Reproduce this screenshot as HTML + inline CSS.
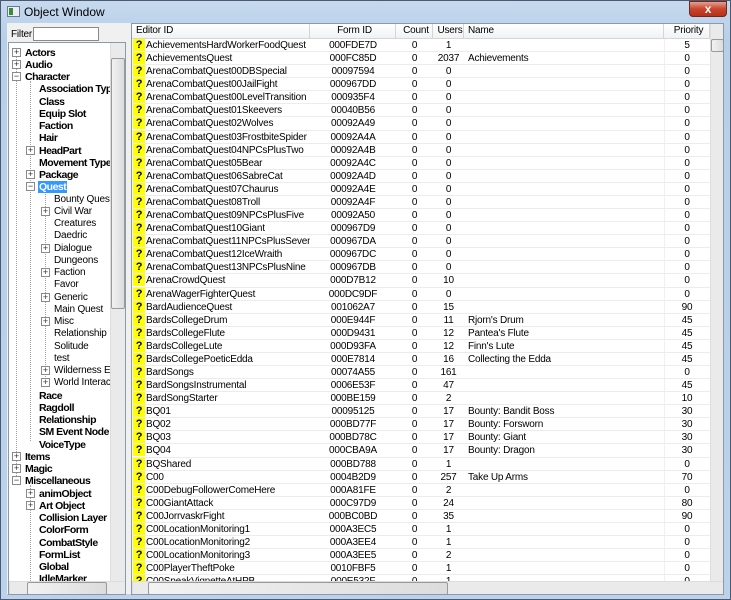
<!DOCTYPE html>
<html><head><meta charset="utf-8"><style>
*{margin:0;padding:0;box-sizing:border-box}
body{width:731px;height:600px;overflow:hidden;background:#fff;font-family:"Liberation Sans",sans-serif;font-size:10px;letter-spacing:-0.2px;color:#000;position:relative}
.frame{position:absolute;left:0;top:0;width:731px;height:600px;background:linear-gradient(#c6d9ee,#b7cfe9 40px,#bcd2ea);border:1px solid #4a5a70}
.title{position:absolute;left:24px;top:5px;font-size:12px;letter-spacing:0;color:#000}
.ticon{position:absolute;left:7px;top:6px;width:13px;height:11px;background:#e8eef4;border:1px solid #6a7a8a}
.ticon:before{content:"";position:absolute;left:1px;top:1px;width:4px;height:7px;background:#3a8a3a}
.close{position:absolute;left:689px;top:1px;width:38px;height:16px;background:linear-gradient(#e8a090,#c8442c 50%,#b83018);border:1px solid #6a2a20;border-radius:0 0 4px 4px;color:#fff;font-weight:bold;text-align:center;font-size:12px;line-height:14px}
.client{position:absolute;left:7px;top:23px;width:717px;height:571px;background:#f0f0f0}
.filterl{position:absolute;left:11px;top:29px;font-size:10px}
.filter{position:absolute;left:33px;top:27px;width:66px;height:14px;background:#fff;border:1px solid #8a8a8a}
.tree{position:absolute;left:8px;top:42px;width:118px;height:553px;background:#fff;border:1px solid #8a9aa8;overflow:hidden}
.ti{position:absolute;white-space:nowrap;height:12px;line-height:12px}
.b{font-weight:bold;font-size:10.5px;letter-spacing:-0.5px}
.box{position:absolute;width:9px;height:9px;border:1px solid #8a8a8a;background:#fff;font-size:9px;letter-spacing:0;line-height:7px;text-align:center;color:#333}
.vs{position:absolute;background:#eaeaea;border-left:1px solid #ddd}
.thumb{position:absolute;background:linear-gradient(90deg,#f2f2f2,#dcdcdc);border:1px solid #9a9a9a;border-radius:2px}
.list{position:absolute;left:131px;top:23px;width:593px;height:572px;background:#fff;border:1px solid #8a9aa8;overflow:hidden}
.hdr{position:absolute;top:0;height:15px;background:linear-gradient(#fff,#f1f2f4);border-right:1px solid #d5d5d5;border-bottom:1px solid #d5d5d5;line-height:14px;padding-left:4px}
.row{position:absolute;left:0;width:578px;height:13.08px;border-bottom:1px solid #ececec;white-space:nowrap}
.row span{position:absolute;top:0;line-height:13px;overflow:hidden}
.q{left:1px;width:12px;height:12px;background:#ffff00;font-weight:bold;text-align:center;font-size:11px}
.e{left:14px;width:164px}.f{left:178px;width:86px;text-align:center}.c{left:264px;width:37px;text-align:center}.u{left:301px;width:31px;text-align:center}.n{left:336px;width:196px}.p{left:532px;width:46px;text-align:center}
.vline{position:absolute;top:15px;width:1px;height:545px;background:#f0f0f0}
.ln{position:absolute;border-left:1px dotted #a0a0a0}
</style></head><body>
<div class="frame"></div>
<div class="ticon"></div>
<div class="title">Object Window</div>
<div class="close">x</div>
<div class="client"></div>
<div class="filterl">Filter</div>
<div class="filter"></div>
<div class="tree">
<div class="ln" style="left:21px;top:38px;height:360px"></div>
<div class="ln" style="left:36px;top:148px;height:188px"></div>
<div class="ln" style="left:7px;top:5px;height:430px"></div>
<div class="ln" style="left:21px;top:442px;height:100px"></div>
<div class="ti b" style="left:16px;top:4px">Actors</div><div class="box" style="left:3px;top:5px">+</div>
<div class="ti b" style="left:16px;top:16px">Audio</div><div class="box" style="left:3px;top:17px">+</div>
<div class="ti b" style="left:16px;top:28px">Character</div><div class="box" style="left:3px;top:29px">−</div>
<div class="ti b" style="left:30px;top:40px">Association Type</div>
<div class="ti b" style="left:30px;top:53px">Class</div>
<div class="ti b" style="left:30px;top:65px">Equip Slot</div>
<div class="ti b" style="left:30px;top:77px">Faction</div>
<div class="ti b" style="left:30px;top:89px">Hair</div>
<div class="ti b" style="left:30px;top:102px">HeadPart</div><div class="box" style="left:17px;top:103px">+</div>
<div class="ti b" style="left:30px;top:114px">Movement Type</div>
<div class="ti b" style="left:30px;top:126px">Package</div><div class="box" style="left:17px;top:127px">+</div>
<div class="ti b" style="left:29px;top:138px;background:#3399ff;color:#fff;padding:0 1px">Quest</div><div class="box" style="left:17px;top:139px">−</div>
<div class="ti" style="left:45px;top:151px">Bounty Quests</div>
<div class="ti" style="left:45px;top:163px">Civil War</div><div class="box" style="left:32px;top:164px">+</div>
<div class="ti" style="left:45px;top:175px">Creatures</div>
<div class="ti" style="left:45px;top:187px">Daedric</div>
<div class="ti" style="left:45px;top:200px">Dialogue</div><div class="box" style="left:32px;top:201px">+</div>
<div class="ti" style="left:45px;top:212px">Dungeons</div>
<div class="ti" style="left:45px;top:224px">Faction</div><div class="box" style="left:32px;top:225px">+</div>
<div class="ti" style="left:45px;top:236px">Favor</div>
<div class="ti" style="left:45px;top:249px">Generic</div><div class="box" style="left:32px;top:250px">+</div>
<div class="ti" style="left:45px;top:261px">Main Quest</div>
<div class="ti" style="left:45px;top:273px">Misc</div><div class="box" style="left:32px;top:274px">+</div>
<div class="ti" style="left:45px;top:285px">Relationship</div>
<div class="ti" style="left:45px;top:298px">Solitude</div>
<div class="ti" style="left:45px;top:310px">test</div>
<div class="ti" style="left:45px;top:322px">Wilderness Encounters</div><div class="box" style="left:32px;top:323px">+</div>
<div class="ti" style="left:45px;top:334px">World Interactions</div><div class="box" style="left:32px;top:335px">+</div>
<div class="ti b" style="left:30px;top:347px">Race</div>
<div class="ti b" style="left:30px;top:359px">Ragdoll</div>
<div class="ti b" style="left:30px;top:371px">Relationship</div>
<div class="ti b" style="left:30px;top:383px">SM Event Node</div>
<div class="ti b" style="left:30px;top:396px">VoiceType</div>
<div class="ti b" style="left:16px;top:408px">Items</div><div class="box" style="left:3px;top:409px">+</div>
<div class="ti b" style="left:16px;top:420px">Magic</div><div class="box" style="left:3px;top:421px">+</div>
<div class="ti b" style="left:16px;top:432px">Miscellaneous</div><div class="box" style="left:3px;top:433px">−</div>
<div class="ti b" style="left:30px;top:445px">animObject</div><div class="box" style="left:17px;top:446px">+</div>
<div class="ti b" style="left:30px;top:457px">Art Object</div><div class="box" style="left:17px;top:458px">+</div>
<div class="ti b" style="left:30px;top:469px">Collision Layer</div>
<div class="ti b" style="left:30px;top:481px">ColorForm</div>
<div class="ti b" style="left:30px;top:494px">CombatStyle</div>
<div class="ti b" style="left:30px;top:506px">FormList</div>
<div class="ti b" style="left:30px;top:518px">Global</div>
<div class="ti b" style="left:30px;top:530px">IdleMarker</div>
<div class="vs" style="left:101px;top:0;width:16px;height:538px"></div>
<div class="thumb" style="left:102px;top:15px;width:14px;height:251px"></div>
<div class="vs" style="left:0;top:538px;width:117px;height:14px;border-top:1px solid #ddd"></div>
<div class="thumb" style="left:18px;top:539px;width:80px;height:13px"></div>
</div>
<div class="list">
<div class="hdr" style="left:0;width:178px">Editor ID</div>
<div class="hdr" style="left:178px;width:86px;text-align:center">Form ID</div>
<div class="hdr" style="left:264px;width:37px;text-align:center">Count</div>
<div class="hdr" style="left:301px;width:31px;text-align:center">Users</div>
<div class="hdr" style="left:332px;width:200px">Name</div>
<div class="hdr" style="left:532px;width:46px;text-align:center">Priority</div>
<div class="hdr" style="left:578px;width:15px"></div>
<div class="vline" style="left:532px"></div>
<div id="rows" style="position:absolute;left:0;top:15px">
<div class="row" style="top:0px"><span class="q">?</span><span class="e">AchievementsHardWorkerFoodQuest</span><span class="f">000FDE7D</span><span class="c">0</span><span class="u">1</span><span class="n"></span><span class="p">5</span></div>
<div class="row" style="top:13.08px"><span class="q">?</span><span class="e">AchievementsQuest</span><span class="f">000FC85D</span><span class="c">0</span><span class="u">2037</span><span class="n">Achievements</span><span class="p">0</span></div>
<div class="row" style="top:26.16px"><span class="q">?</span><span class="e">ArenaCombatQuest00DBSpecial</span><span class="f">00097594</span><span class="c">0</span><span class="u">0</span><span class="p">0</span></div>
<div class="row" style="top:39.24px"><span class="q">?</span><span class="e">ArenaCombatQuest00JailFight</span><span class="f">000967DD</span><span class="c">0</span><span class="u">0</span><span class="p">0</span></div>
<div class="row" style="top:52.32px"><span class="q">?</span><span class="e">ArenaCombatQuest00LevelTransition</span><span class="f">000935F4</span><span class="c">0</span><span class="u">0</span><span class="p">0</span></div>
<div class="row" style="top:65.4px"><span class="q">?</span><span class="e">ArenaCombatQuest01Skeevers</span><span class="f">00040B56</span><span class="c">0</span><span class="u">0</span><span class="p">0</span></div>
<div class="row" style="top:78.48px"><span class="q">?</span><span class="e">ArenaCombatQuest02Wolves</span><span class="f">00092A49</span><span class="c">0</span><span class="u">0</span><span class="p">0</span></div>
<div class="row" style="top:91.56px"><span class="q">?</span><span class="e">ArenaCombatQuest03FrostbiteSpider</span><span class="f">00092A4A</span><span class="c">0</span><span class="u">0</span><span class="p">0</span></div>
<div class="row" style="top:104.64px"><span class="q">?</span><span class="e">ArenaCombatQuest04NPCsPlusTwo</span><span class="f">00092A4B</span><span class="c">0</span><span class="u">0</span><span class="p">0</span></div>
<div class="row" style="top:117.72px"><span class="q">?</span><span class="e">ArenaCombatQuest05Bear</span><span class="f">00092A4C</span><span class="c">0</span><span class="u">0</span><span class="p">0</span></div>
<div class="row" style="top:130.8px"><span class="q">?</span><span class="e">ArenaCombatQuest06SabreCat</span><span class="f">00092A4D</span><span class="c">0</span><span class="u">0</span><span class="p">0</span></div>
<div class="row" style="top:143.88px"><span class="q">?</span><span class="e">ArenaCombatQuest07Chaurus</span><span class="f">00092A4E</span><span class="c">0</span><span class="u">0</span><span class="p">0</span></div>
<div class="row" style="top:156.96px"><span class="q">?</span><span class="e">ArenaCombatQuest08Troll</span><span class="f">00092A4F</span><span class="c">0</span><span class="u">0</span><span class="p">0</span></div>
<div class="row" style="top:170.04px"><span class="q">?</span><span class="e">ArenaCombatQuest09NPCsPlusFive</span><span class="f">00092A50</span><span class="c">0</span><span class="u">0</span><span class="p">0</span></div>
<div class="row" style="top:183.12px"><span class="q">?</span><span class="e">ArenaCombatQuest10Giant</span><span class="f">000967D9</span><span class="c">0</span><span class="u">0</span><span class="p">0</span></div>
<div class="row" style="top:196.2px"><span class="q">?</span><span class="e">ArenaCombatQuest11NPCsPlusSeven</span><span class="f">000967DA</span><span class="c">0</span><span class="u">0</span><span class="p">0</span></div>
<div class="row" style="top:209.28px"><span class="q">?</span><span class="e">ArenaCombatQuest12IceWraith</span><span class="f">000967DC</span><span class="c">0</span><span class="u">0</span><span class="p">0</span></div>
<div class="row" style="top:222.36px"><span class="q">?</span><span class="e">ArenaCombatQuest13NPCsPlusNine</span><span class="f">000967DB</span><span class="c">0</span><span class="u">0</span><span class="p">0</span></div>
<div class="row" style="top:235.44px"><span class="q">?</span><span class="e">ArenaCrowdQuest</span><span class="f">000D7B12</span><span class="c">0</span><span class="u">10</span><span class="p">0</span></div>
<div class="row" style="top:248.52px"><span class="q">?</span><span class="e">ArenaWagerFighterQuest</span><span class="f">000DC9DF</span><span class="c">0</span><span class="u">0</span><span class="p">0</span></div>
<div class="row" style="top:261.6px"><span class="q">?</span><span class="e">BardAudienceQuest</span><span class="f">001062A7</span><span class="c">0</span><span class="u">15</span><span class="p">90</span></div>
<div class="row" style="top:274.68px"><span class="q">?</span><span class="e">BardsCollegeDrum</span><span class="f">000E944F</span><span class="c">0</span><span class="u">11</span><span class="n">Rjorn's Drum</span><span class="p">45</span></div>
<div class="row" style="top:287.76px"><span class="q">?</span><span class="e">BardsCollegeFlute</span><span class="f">000D9431</span><span class="c">0</span><span class="u">12</span><span class="n">Pantea's Flute</span><span class="p">45</span></div>
<div class="row" style="top:300.84px"><span class="q">?</span><span class="e">BardsCollegeLute</span><span class="f">000D93FA</span><span class="c">0</span><span class="u">12</span><span class="n">Finn's Lute</span><span class="p">45</span></div>
<div class="row" style="top:313.92px"><span class="q">?</span><span class="e">BardsCollegePoeticEdda</span><span class="f">000E7814</span><span class="c">0</span><span class="u">16</span><span class="n">Collecting the Edda</span><span class="p">45</span></div>
<div class="row" style="top:327px"><span class="q">?</span><span class="e">BardSongs</span><span class="f">00074A55</span><span class="c">0</span><span class="u">161</span><span class="p">0</span></div>
<div class="row" style="top:340.08px"><span class="q">?</span><span class="e">BardSongsInstrumental</span><span class="f">0006E53F</span><span class="c">0</span><span class="u">47</span><span class="p">45</span></div>
<div class="row" style="top:353.16px"><span class="q">?</span><span class="e">BardSongStarter</span><span class="f">000BE159</span><span class="c">0</span><span class="u">2</span><span class="p">10</span></div>
<div class="row" style="top:366.24px"><span class="q">?</span><span class="e">BQ01</span><span class="f">00095125</span><span class="c">0</span><span class="u">17</span><span class="n">Bounty: Bandit Boss</span><span class="p">30</span></div>
<div class="row" style="top:379.32px"><span class="q">?</span><span class="e">BQ02</span><span class="f">000BD77F</span><span class="c">0</span><span class="u">17</span><span class="n">Bounty: Forsworn</span><span class="p">30</span></div>
<div class="row" style="top:392.4px"><span class="q">?</span><span class="e">BQ03</span><span class="f">000BD78C</span><span class="c">0</span><span class="u">17</span><span class="n">Bounty: Giant</span><span class="p">30</span></div>
<div class="row" style="top:405.48px"><span class="q">?</span><span class="e">BQ04</span><span class="f">000CBA9A</span><span class="c">0</span><span class="u">17</span><span class="n">Bounty: Dragon</span><span class="p">30</span></div>
<div class="row" style="top:418.56px"><span class="q">?</span><span class="e">BQShared</span><span class="f">000BD788</span><span class="c">0</span><span class="u">1</span><span class="p">0</span></div>
<div class="row" style="top:431.64px"><span class="q">?</span><span class="e">C00</span><span class="f">0004B2D9</span><span class="c">0</span><span class="u">257</span><span class="n">Take Up Arms</span><span class="p">70</span></div>
<div class="row" style="top:444.72px"><span class="q">?</span><span class="e">C00DebugFollowerComeHere</span><span class="f">000A81FE</span><span class="c">0</span><span class="u">2</span><span class="p">0</span></div>
<div class="row" style="top:457.8px"><span class="q">?</span><span class="e">C00GiantAttack</span><span class="f">000C97D9</span><span class="c">0</span><span class="u">24</span><span class="p">80</span></div>
<div class="row" style="top:470.88px"><span class="q">?</span><span class="e">C00JorrvaskrFight</span><span class="f">000BC0BD</span><span class="c">0</span><span class="u">35</span><span class="p">90</span></div>
<div class="row" style="top:483.96px"><span class="q">?</span><span class="e">C00LocationMonitoring1</span><span class="f">000A3EC5</span><span class="c">0</span><span class="u">1</span><span class="p">0</span></div>
<div class="row" style="top:497.04px"><span class="q">?</span><span class="e">C00LocationMonitoring2</span><span class="f">000A3EE4</span><span class="c">0</span><span class="u">1</span><span class="p">0</span></div>
<div class="row" style="top:510.12px"><span class="q">?</span><span class="e">C00LocationMonitoring3</span><span class="f">000A3EE5</span><span class="c">0</span><span class="u">2</span><span class="p">0</span></div>
<div class="row" style="top:523.2px"><span class="q">?</span><span class="e">C00PlayerTheftPoke</span><span class="f">0010FBF5</span><span class="c">0</span><span class="u">1</span><span class="p">0</span></div>
<div class="row" style="top:536.28px"><span class="q">?</span><span class="e">C00SpeakVignetteAtHPB</span><span class="f">000E532F</span><span class="c">0</span><span class="u">1</span><span class="p">0</span></div>
</div>
<div class="vs" style="left:578px;top:0;width:15px;height:557px"></div>
<div class="thumb" style="left:579px;top:15px;width:13px;height:13px"></div>
<div class="vs" style="left:0;top:557px;width:593px;height:15px;border-top:1px solid #ddd"></div>
<div class="thumb" style="left:16px;top:558px;width:300px;height:13px"></div>
</div>
</body></html>
